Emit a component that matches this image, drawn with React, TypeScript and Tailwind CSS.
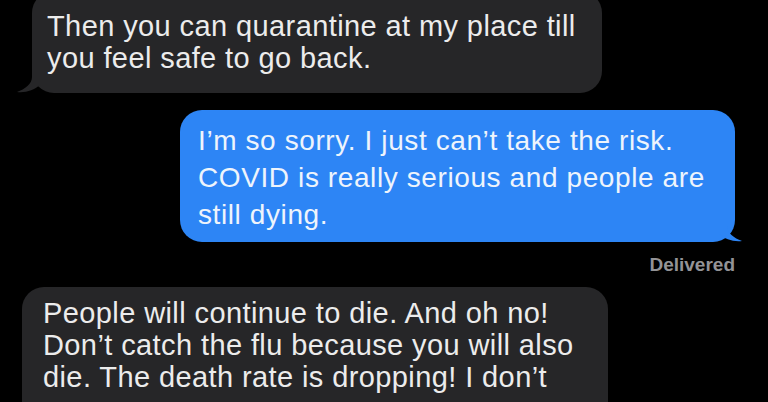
const GrayTail = () => (
  <svg
    className="absolute left-[-16px] bottom-0"
    width="30"
    height="26"
    viewBox="0 0 30 26"
  >
    <path
      d="M16 0 L16 10 C16 17 9 22 1 25 C10 26 18 23 24 18 L30 18 L30 0 Z"
      fill="#262628"
    />
  </svg>
);

const BlueTail = () => (
  <svg
    className="absolute right-[-8px] bottom-0"
    width="30"
    height="26"
    viewBox="0 0 30 26"
  >
    <path
      d="M14 0 L14 10 C14 17 21 22 29 25 C20 26 12 23 6 18 L0 18 L0 0 Z"
      fill="#2d85f5"
    />
  </svg>
);

const App = () => {
  return (
    <div className="h-[402px] overflow-hidden bg-black font-['Liberation_Sans',Arial,sans-serif]">
      <div className="flex flex-col">
        {/* incoming */}
        <div className="relative ml-[32px] mt-[-9px] w-[570px] rounded-[22px] bg-[#262628] pb-[19px] pl-[15px] pt-[19px] text-[29px] leading-[32px] tracking-[0.4px] text-[#ececec]">
          <GrayTail />
          <span className="relative block">Then you can quarantine at my place till</span>
          <span className="relative block">you feel safe to go back.</span>
        </div>

        {/* outgoing */}
        <div className="relative ml-[180px] mt-[17px] w-[555px] rounded-[22px] bg-[#2d85f5] pb-[9px] pl-[18px] pt-[12px] text-[28px] leading-[37px] tracking-[0.6px] text-[#eef4fc]">
          <BlueTail />
          <span className="relative block">I’m so sorry. I just can’t take the risk.</span>
          <span className="relative block">COVID is really serious and people are</span>
          <span className="relative block">still dying.</span>
        </div>

        <div className="mt-[12px] w-[735px] text-right text-[19px] font-bold leading-[22px] text-[#939396]">
          Delivered
        </div>

        {/* incoming, runs past the bottom edge */}
        <div className="relative ml-[22px] mt-[11px] w-[586px] rounded-[22px] bg-[#262628] pb-[40px] pl-[21px] pt-[10px] text-[29px] leading-[32px] tracking-[0.4px] text-[#ececec]">
          <span className="block">People will continue to die. And oh no!</span>
          <span className="block">Don’t catch the flu because you will also</span>
          <span className="block">die. The death rate is dropping! I don’t</span>
        </div>
      </div>
    </div>
  );
};

export default App;
